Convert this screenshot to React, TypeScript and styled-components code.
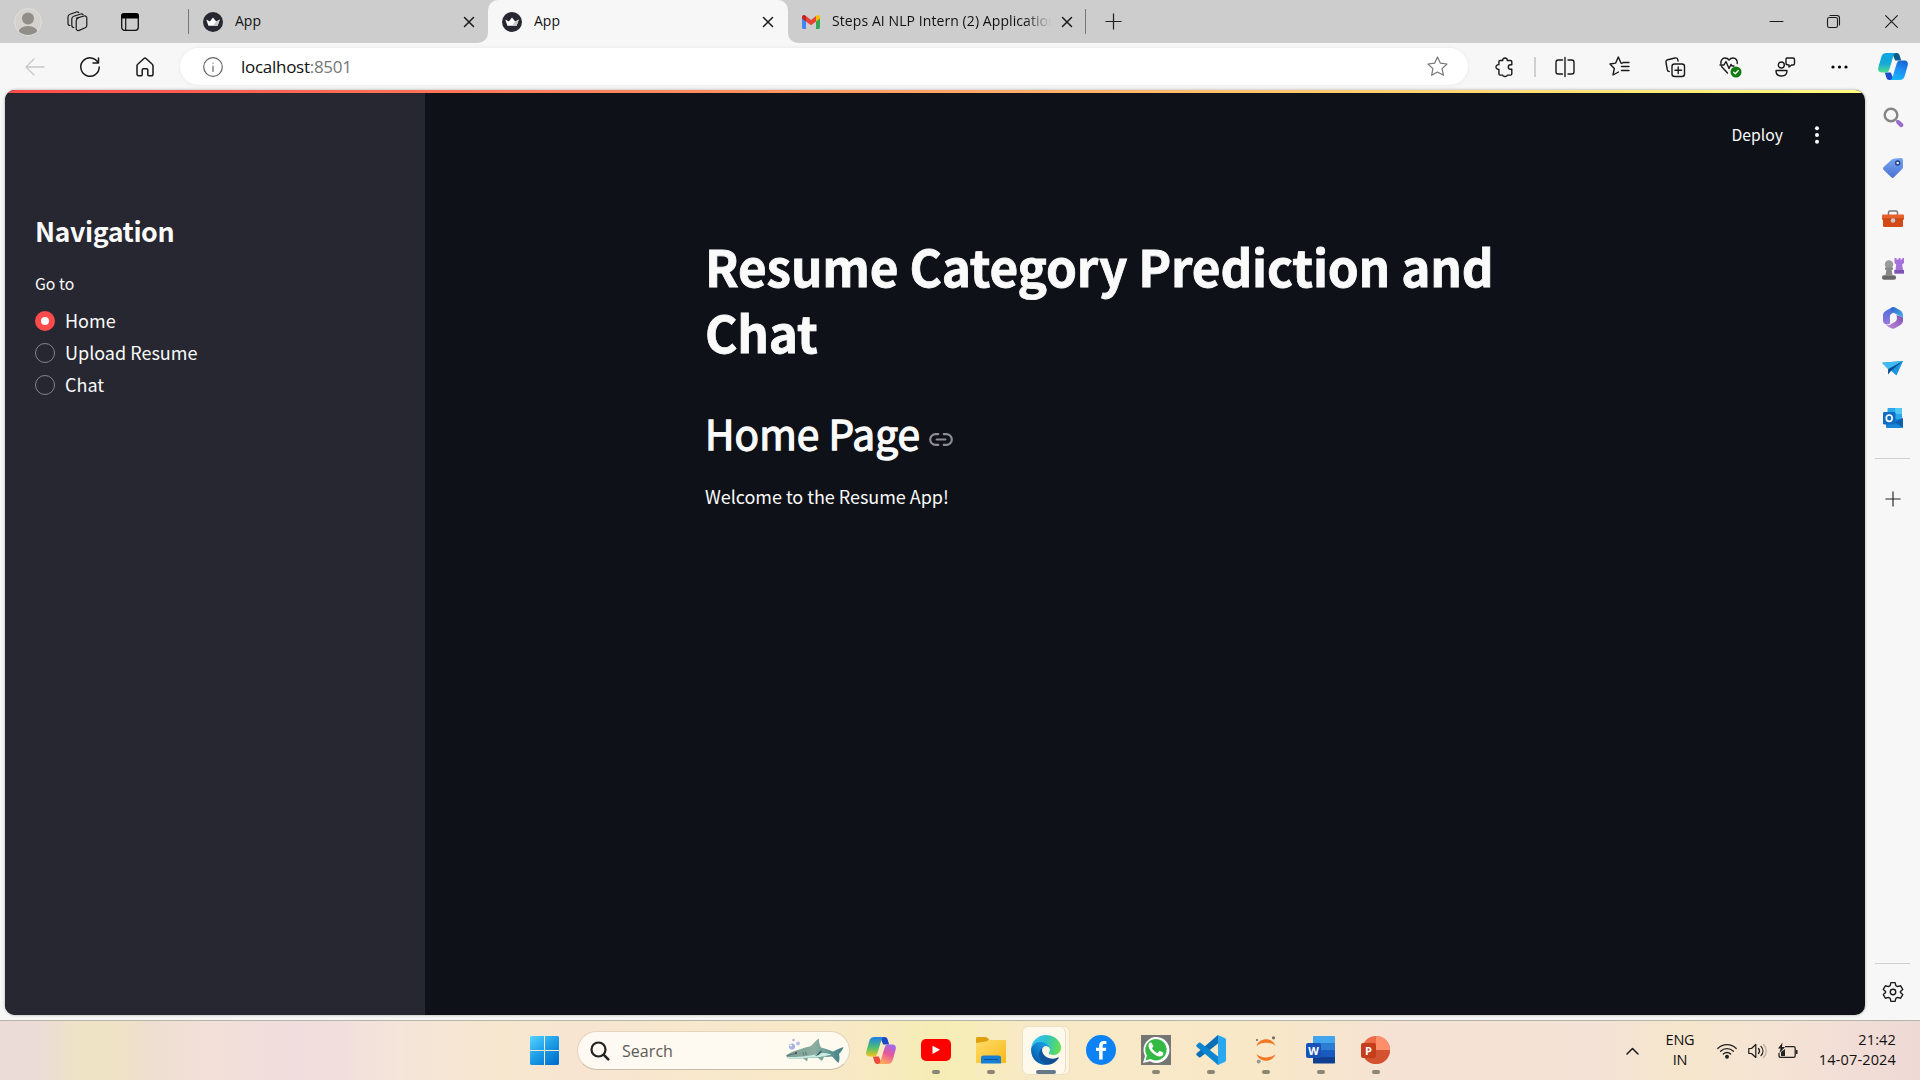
import React from "react";
import styled, { createGlobalStyle, css } from "styled-components";

const UI = `"Open Sans", "Noto Sans", sans-serif`;
const APP = `"Noto Sans CJK SC", "Noto Sans CJK JP", sans-serif`;

const Global = createGlobalStyle`
  * { box-sizing: border-box; }
  html, body { margin: 0; padding: 0; }
  body { width: 1920px; height: 1080px; overflow: hidden; background: #f7f7f7; font-family: ${UI}; color: #111; }
  svg { display: block; flex: none; overflow: visible; }
`;

const Screen = styled.div`
  width: 1920px;
  height: 1080px;
  display: flex;
  flex-direction: column;
`;

/* ---------- tab strip ---------- */
const TabStrip = styled.div`
  height: 43px;
  display: flex;
  flex: none;
  background: #f7f7f7;
`;
const StripLeft = styled.div`
  width: 488px;
  display: flex;
  align-items: center;
  background: #cdcdcd;
  border-bottom-right-radius: 10px;
`;
const StripRight = styled.div`
  flex: 1;
  display: flex;
  align-items: center;
  background: #cdcdcd;
  border-bottom-left-radius: 10px;
`;
const ActiveSlot = styled.div`
  width: 300px;
  background: linear-gradient(#cdcdcd 50%, #f7f7f7 50%);
`;
const Tab = styled.div<{ $w: number; $active?: boolean }>`
  width: ${(p) => p.$w}px;
  height: 43px;
  display: flex;
  align-items: center;
  padding: 0 12px 0 14px;
  ${(p) => p.$active && css`background: #f7f7f7; border-radius: 10px 10px 0 0;`}
`;
const TabTitle = styled.span<{ $fade?: boolean; $track?: number }>`
  flex: 1;
  margin: 0 ${(p) => (p.$fade ? 10 : 3)}px 0 12px;
  font-size: 14px;
  line-height: 20px;
  letter-spacing: ${(p) => p.$track ?? 0}px;
  padding-bottom: 2px;
  white-space: nowrap;
  overflow: hidden;
  ${(p) => p.$fade && css`mask-image: linear-gradient(90deg, #000 88%, transparent 100%);`}
`;
const StripDivider = styled.i`
  width: 1px;
  height: 25px;
  background: #777;
`;
const Slot = styled.div<{ $w: number; $h?: number }>`
  width: ${(p) => p.$w}px;
  height: ${(p) => (p.$h ? p.$h + "px" : "auto")};
  flex: none;
  display: flex;
  align-items: center;
  justify-content: center;
`;
const Spacer = styled.div`
  flex: 1;
`;

/* ---------- toolbar ---------- */
const Body = styled.div`
  height: 977px;
  flex: none;
  display: flex;
`;
const Main = styled.div`
  width: 1866px;
  display: flex;
  flex-direction: column;
`;
const Toolbar = styled.div`
  height: 47px;
  flex: none;
  display: flex;
  align-items: center;
  padding-left: 7px;
`;
const Address = styled.div`
  width: 1288px;
  flex: none;
  height: 37px;
  margin: 0 9px 0 8px;
  border-radius: 19px;
  background: #fff;
  box-shadow: 0 0 4px rgba(0, 0, 0, 0.07);
  display: flex;
  align-items: center;
  padding: 0 20px 0 23px;
`;
const Url = styled.span`
  flex: 1;
  margin-left: 18px;
  padding-bottom: 1px;
  font-size: 17px;
  letter-spacing: -0.28px;
  color: #111;
  span { color: #767676; }
`;
const ToolDivider = styled.i`
  width: 2px;
  height: 20px;
  background: #d0d0d0;
`;

/* ---------- web page ---------- */
const Frame = styled.div`
  width: 1860px;
  height: 925px;
  margin-left: 5px;
  border-radius: 10px;
  overflow: hidden;
  display: flex;
  flex-direction: column;
  background: #0e1117;
  box-shadow: 0 0 3px rgba(0, 0, 0, 0.35);
`;
const Decoration = styled.div`
  height: 3px;
  flex: none;
  background: linear-gradient(90deg, #ff4b4b, #fffd80);
`;
const Columns = styled.div`
  flex: 1;
  display: flex;
`;
const Sidebar = styled.aside`
  width: 420px;
  background: #262730;
  padding: 117px 30px 0;
  font-family: ${APP};
  color: #fafafa;
`;
const NavTitle = styled.h2`
  margin: 0;
  font-size: 26.8px;
  line-height: 42px;
  font-weight: 700;
  letter-spacing: -0.45px;
`;
const GroupLabel = styled.div`
  margin: 19px 0 7px;
  font-size: 15.75px;
  line-height: 26px;
`;
const Option = styled.label`
  height: 32px;
  display: flex;
  align-items: center;
  gap: 10px;
  font-size: 18px;
  line-height: 30px;
`;
const Radio = styled.i<{ $on?: boolean }>`
  width: 20px;
  height: 20px;
  margin-top: 2px;
  border-radius: 50%;
  border: ${(p) => (p.$on ? "6px solid #ff4b4b" : "1px solid #83848c")};
  background: ${(p) => (p.$on ? "#fafafa" : "#262730")};
`;
const Content = styled.main`
  flex: 1;
  display: flex;
  flex-direction: column;
  font-family: ${APP};
  color: #fafafa;
`;
const Header = styled.header`
  height: 84px;
  display: flex;
  align-items: center;
  justify-content: flex-end;
  padding-right: 38px;
  gap: 24px;
  font-size: 15.75px;
  span { padding-bottom: 2px; }
`;
const Article = styled.article`
  width: 880px;
  padding: 56px 0 0 280px;
  box-sizing: content-box;
`;
const Title = styled.h1`
  margin: 0;
  font-size: 49.5px;
  line-height: 66px;
  font-weight: 700;
  letter-spacing: -0.18px;
  -webkit-text-stroke: 0.8px #fafafa;
`;
const Heading = styled.h2`
  margin: 41px 0 0;
  display: flex;
  align-items: center;
  gap: 9px;
  font-size: 40.5px;
  line-height: 54px;
  font-weight: 400;
  letter-spacing: 0.1px;
  -webkit-text-stroke: 1.3px #fafafa;
  svg { margin-top: 12px; }
`;
const Paragraph = styled.p`
  margin: 20px 0 0;
  font-size: 18px;
  line-height: 32px;
  letter-spacing: -0.04px;
`;

/* ---------- edge side bar ---------- */
const EdgeBar = styled.div`
  width: 54px;
  padding-right: 1px;
  display: flex;
  flex-direction: column;
  align-items: center;
`;
const EdgeRule = styled.i`
  width: 35px;
  height: 1px;
  background: #cfcfcf;
`;

/* ---------- task bar ---------- */
const Taskbar = styled.div`
  height: 60px;
  display: flex;
  align-items: center;
  border-top: 1px solid #b9b3aa;
  background: linear-gradient(90deg, #ecdcd8 0, #ecdcd6 40px, #efe3c6 80px, #efe3c6 115px, #eeded0 150px, #f2e0d8 200px,
    #f1dddd 290px, #f1dedd 335px, #f5e5da 400px, #f7e7cf 500px, #f7e5d2 580px, #f8e8cc 700px, #f8e9c6 850px,
    #f5edb4 935px, #f6edb8 960px, #f8e9c6 1030px, #f8e8c8 1270px, #f5e2d4 1390px, #f4e2d6 1600px, #f6e6cc 1680px,
    #f5e4d3 1760px, #f3dfd6 1830px, #eed9d6 1920px);
`;
const Start = styled.div`
  width: 577px;
  display: flex;
  justify-content: flex-end;
  padding-right: 18px;
`;
const SearchBox = styled.div`
  width: 273px;
  height: 39px;
  border-radius: 20px;
  margin-right: 4px;
  background: rgba(255, 253, 248, 0.84);
  border: 1px solid #e3d6bd;
  border-bottom-color: #c9bda6;
  display: flex;
  align-items: center;
  padding: 0 5px 0 12px;
  font-size: 16px;
  color: #5c5a57;
  letter-spacing: 0.05px;
  span { flex: 1; margin-left: 12px; }
`;
const TaskItem = styled.div`
  width: 55px;
  height: 59px;
  flex: none;
  display: flex;
  flex-direction: column;
  align-items: center;
  padding-top: 14px;
`;
const Running = styled.i<{ $wide?: boolean }>`
  width: ${(p) => (p.$wide ? 20 : 8)}px;
  height: 4px;
  border-radius: 2px;
  margin-top: 5px;
  background: ${(p) => (p.$wide ? "#66798a" : "#8b8573")};
`;
const ActiveTile = styled.div`
  width: 48px;
  height: 49px;
  margin-top: -9px;
  border-radius: 6px;
  background: rgba(255, 252, 240, 0.65);
  border: 1px solid #eee0c4;
`;
const ActiveInner = styled.div`
  width: 43px;
  height: 47px;
  border-radius: 6px;
  background: rgba(255, 252, 240, 0.6);
  border-right: 1px solid #e8dcc4;
  padding: 8px 0 0 5px;
  display: flex;
  flex-direction: column;
  align-items: center;
`;
const Lang = styled.div`
  width: 60px;
  text-align: center;
  font-size: 14.5px;
  line-height: 20px;
  letter-spacing: -0.2px;
  padding-bottom: 2px;
`;
const Clock = styled.div`
  width: 91px;
  margin-right: 24px;
  text-align: right;
  font-size: 14.5px;
  line-height: 20px;
  letter-spacing: 0.15px;
  padding-bottom: 2px;
`;

/* ---------- line icons ---------- */
type LP = { w: number; h?: number; box?: string; c?: string; s?: number; children: React.ReactNode };
const Line = ({ w, h = w, box, c = "#1a1a1a", s = 1.3, children }: LP) => (
  <svg width={w} height={h} viewBox={box ?? `0 0 ${w} ${h}`} fill="none" stroke={c} strokeWidth={s} strokeLinecap="round" strokeLinejoin="round">
    {children}
  </svg>
);

const Crown = () => (
  <svg width="20" height="20" viewBox="0 0 20 20">
    <circle cx="10" cy="10" r="10" fill="#262730" />
    <path d="M3.3 7.4 6.8 9.6 10 5.4l3.2 4.2 3.6-2.2-2.2 6.3H5.4z" fill="#fff" />
    <path d="M13.2 9.6l3.6-2.2-2.2 6.3H10z" fill="#c9c9cc" />
  </svg>
);
const Cross = ({ w = 10, s = 1.5 }: { w?: number; s?: number }) => (
  <Line w={w} box="0 0 10 10" s={(s * 10) / w}><path d="M.5.5l9 9M9.5.5l-9 9" /></Line>
);
const Plus = ({ w = 18 }: { w?: number }) => (
  <Line w={w} box="0 0 18 18" c="#222"><path d="M9 1v16M1 9h16" /></Line>
);
const Avatar = () => (
  <svg width="28" height="28" viewBox="0 0 28 28">
    <defs><clipPath id="av"><circle cx="14" cy="14" r="13" /></clipPath></defs>
    <circle cx="14" cy="14" r="13.4" fill="#d4d2cf" stroke="#e2e0dd" />
    <g clipPath="url(#av)" fill="#918d89"><circle cx="14" cy="10.5" r="6" /><ellipse cx="14" cy="25" rx="9.8" ry="7" /></g>
  </svg>
);
const Gmail = () => (
  <svg width="18" height="14" viewBox="0 0 18 14">
    <path d="M0 2v10.6C0 13.4.6 14 1.4 14H4V5z" fill="#4285f4" />
    <path d="M18 2v10.6c0 .8-.6 1.4-1.4 1.4H14V5z" fill="#34a853" />
    <path d="M14 1.2V6.500l4-3V2c0-1.900-2.100-2.500-3.200-1.600z" fill="#fbbc04" />
    <path d="M4 6.500V1l5 3.900L14 1v5.500L9 10.300z" fill="#ea4335" />
    <path d="M0 2v1.500l4 3V1L3.200.4C2.100-.5 0 .1 0 2z" fill="#c5221f" />
  </svg>
);

const Copilot = ({ id, w, colors }: { id: string; w: number; colors: string[] }) => (
  <svg width={w} height={w * 0.9} viewBox="0 0 30 27">
    <defs>
      <linearGradient id={id + "a"} x1="0" y1="0" x2="0" y2="1"><stop offset="0" stopColor={colors[0]} /><stop offset=".55" stopColor={colors[1]} /><stop offset="1" stopColor={colors[2]} /></linearGradient>
      <linearGradient id={id + "b"} x1=".8" y1="0" x2=".4" y2="1"><stop offset="0" stopColor={colors[3]} /><stop offset=".5" stopColor={colors[4]} /><stop offset="1" stopColor={colors[5]} /></linearGradient>
    </defs>
    <path d="M14 0h4.500c2 0 2.800 1.200 3.300 3l1.400 4.500h-6z" fill={colors[6]} />
    <path d="M16 27h-4.500c-2 0-2.800-1.200-3.300-3L6.800 19.500h6z" fill={colors[7]} />
    <path d="M8.500 0H18c-1.500.3-2.200 1.500-2.700 3.200L11.500 16c-.7 2.400-1.700 3.500-4 3.500H3.600C.8 19.500-.4 17.300.3 14.600L3.300 4C4 1.400 5.600 0 8.500 0z" fill={`url(#${id}a)`} />
    <path d="M21.500 27H12c1.500-.3 2.200-1.500 2.700-3.200L18.500 11c.7-2.400 1.700-3.500 4-3.500h3.900c2.800 0 4 2.200 3.300 4.900L26.700 23c-.7 2.600-2.300 4-5.200 4z" fill={`url(#${id}b)`} />
  </svg>
);

/* ---------- edge sidebar icons ---------- */
const SideSearch = () => (
  <svg width="20" height="20" viewBox="0 0 20 20" fill="none"><circle cx="8" cy="8" r="6.300" stroke="#858585" strokeWidth="2.400" /><path d="M12.700 12.700l1.800 1.800" stroke="#999" strokeWidth="2" /><path d="M15.300 15.300l3 2.800" stroke="#9b6bcc" strokeWidth="4.200" strokeLinecap="round" /></svg>
);
const SideTag = () => (
  <svg width="20" height="20" viewBox="0 0 20 20"><defs><linearGradient id="tg" x1="0" y1="0" x2="0" y2="1"><stop stopColor="#76a5f0" /><stop offset="1" stopColor="#4a72d4" /></linearGradient></defs><path d="M10.500.8 17.800 0c1.300 0 2.200.8 2.200 2v7c0 .8-.3 1.400-.8 2l-8.300 8.300c-.8.8-1.800.8-2.600 0L.7 12c-.9-.9-.9-2 0-2.900L8.800 1.500z" fill="url(#tg)" /><circle cx="14.700" cy="5" r="2" fill="#dce8fb" stroke="#253f8a" strokeWidth="1.400" /></svg>
);
const SideTools = () => (
  <svg width="22" height="17" viewBox="0 0 22 17"><path d="M6.500 5V2.500C6.500 1.500 7 1 8 1h6c1 0 1.500.5 1.500 1.500V5" fill="none" stroke="#777" strokeWidth="1.500" /><rect x="1" y="6" width="20" height="11" rx="1.500" fill="#d34a17" /><rect x="0" y="4.500" width="22" height="5" rx="1" fill="#e8602a" /><rect x="0" y="8.500" width="22" height="1" fill="#b83a0e" /><circle cx="11" cy="10.500" r="2.300" fill="#c9c9c9" /></svg>
);
const SideGames = () => (
  <svg width="22" height="22" viewBox="0 0 22 22"><path d="M12.500 0h2v1.500h2V0h2v1.500h1.800V0H22v5l-1.800 1.500L21 12h1v3.500h-9.500V12h1l.7-5.500L12.500 5z" fill="#a673db" /><path d="M12.500 12H22v3.500h-9.500z" fill="#7c52b5" /><circle cx="7" cy="6.500" r="4.200" fill="#9a9a9a" /><path d="M3 9.500h8v2.200H9.600L10.500 17h-7l.9-5.300H3z" fill="#888" /><rect x="0" y="17.300" width="14" height="4.500" rx="2" fill="#686868" /></svg>
);
const Side365 = () => (
  <svg width="20" height="22" viewBox="0 0 20 22">
    <defs>
      <linearGradient id="m1" x1="0" y1="0" x2="0" y2="1"><stop stopColor="#3f6fe0" /><stop offset="1" stopColor="#9a78dc" /></linearGradient>
      <linearGradient id="m2" x1="0" y1="0" x2="1" y2="1"><stop stopColor="#2b63c8" /><stop offset="1" stopColor="#4fb8f0" /></linearGradient>
      <linearGradient id="m3" x1="0" y1="1" x2="1" y2="0"><stop stopColor="#c48be0" /><stop offset="1" stopColor="#7d4fb0" /></linearGradient>
    </defs>
    <path d="M9.500 0 3 3.700C1 4.900 0 6.400 0 8.600v5c0 2 1.400 3.800 3.500 4 1.300.1 2.500-.4 3.500-1V9.500c0-1.200.7-2.300 2-3l3-1.700z" fill="url(#m1)" />
    <path d="M9.500 0c1-.2 2 .1 2.700.6l5.100 3c1.800 1 2.700 2.700 2.700 4.700v5.500c0-2-1-3.300-2.500-4.200L9.800 5.300C8.200 4.300 7.700 1.500 9.500 0z" fill="url(#m2)" />
    <path d="M20 11v2.500c0 2-.9 3.400-2.600 4.500l-5 3.100c-1.800 1-3.300 1-5 0l-4.700-3c2.300.6 3.800 0 5-.8l4-2.300c1.300-.8 1.800-1.700 1.800-3V8l4 1.600c1.500.9 2.500 1.200 2.500 1.400z" fill="url(#m3)" />
    <circle cx="10.300" cy="11" r="3.500" fill="#f7f7f7" />
  </svg>
);
const SidePlane = () => (
  <svg width="21" height="15" viewBox="0 0 21 15"><path d="M0 1.800 21 0 14.500 14.500 9 9.800 6 13V8z" fill="#1b95e0" /><path d="M0 1.800 21 0 6.500 8z" fill="#3fb9f2" /><path d="M6.500 8 21 0 9 9.800 6 13.500z" fill="#0c4a8c" /></svg>
);
const SideOutlook = () => (
  <svg width="20" height="20" viewBox="0 0 20 20"><rect x="4.500" y="0" width="14.500" height="14" rx="1" fill="#2aa7ea" /><path d="M12 0h7v6h-7z" fill="#50c8f5" /><path d="M3 11h17v8a1 1 0 0 1-1 1H4a1 1 0 0 1-1-1z" fill="#1686d8" /><path d="M20 10v9.500L11 14z" fill="#0f5fae" /><rect x="0" y="4" width="12.500" height="12.500" rx="1.200" fill="#0f6cc4" /><ellipse cx="6.200" cy="10.200" rx="2.900" ry="3.200" fill="none" stroke="#fff" strokeWidth="1.700" /></svg>
);

/* ---------- task bar icons ---------- */
const Windows = () => (
  <svg width="29" height="29" viewBox="0 0 29 29"><defs><linearGradient id="wn" gradientUnits="userSpaceOnUse" x1="0" y1="0" x2="24" y2="29"><stop stopColor="#56d4ff" /><stop offset=".5" stopColor="#1f9fe8" /><stop offset="1" stopColor="#0070cf" /></linearGradient></defs><path d="M1 0h13v14H0V1zM15 0h13l1 1v13H15zM0 15h14v14H1l-1-1zM15 15h14v13l-1 1H15z" fill="url(#wn)" /></svg>
);
const Shark = () => (
  <svg width="58" height="26" viewBox="0 0 58 26">
    <defs><linearGradient id="sk" x1="0" y1="0" x2="1" y2="0"><stop stopColor="#7a9c96" /><stop offset=".5" stopColor="#8cae9f" /><stop offset="1" stopColor="#3d7f86" /></linearGradient></defs>
    <circle cx="6" cy="8.500" r="3.100" fill="#a9b2e2" /><circle cx="12" cy="5.500" r="1.900" fill="#b5bde8" /><circle cx="7.500" cy="2" r="1.300" fill="#c4a9dc" /><circle cx="5" cy="7.500" r="1" fill="#fff" />
    <path d="M0 17.500C6 13 15 11 25 8 28 5 30 2 32.800.5 33 4 33.500 7 35 9.500c4 1 8 2.500 12 4 3.500-1.500 7-3.500 10.500-4.500-1 3-3 5.500-4.500 7 .7 3 .8 6-.5 9-2.500-2-4.500-4.500-6.500-6.500-3 .5-5.500.5-8 .3L36 23l-4-3H22l-1 3.500-4-3.300C10 20.500 4 21 1.500 20z" fill="url(#sk)" />
    <path d="M1.500 19c10 .5 24-1 32-3.500 4.500-1 9 0 12 1-7 2-12 3-24 3.200C12 20.500 5 21 1.500 20z" fill="#c9ebe2" />
    <path d="M36 12.500c-2.500 0-3 3-7 5.500 3.500-.5 6-2 7-5.500z" fill="#35616a" /><path d="M1 17.500l9-2M17 14.500l1 3M19.500 14l1 3" stroke="#48696c" strokeWidth=".8" /><circle cx="10" cy="15" r="1" fill="#702b38" />
  </svg>
);
const YouTube = () => (
  <svg width="30" height="28" viewBox="0 0 30 28"><rect y="3" width="30" height="22" rx="5" fill="#f00" /><path d="M11.500 9.700v8.200l7.500-4.100z" fill="#fff" /></svg>
);
const Folder = () => (
  <svg width="30" height="28" viewBox="0 0 30 28"><defs><linearGradient id="fd" x1="0" y1="0" x2="1" y2="1"><stop stopColor="#ffdd6b" /><stop offset="1" stopColor="#f7b818" /></linearGradient></defs><path d="M0 2.500C0 1.500.6 1 1.500 1H9c1 0 1.800.3 2.500 1L14 4.500h15V9H0z" fill="#dfa00d" /><path d="M0 7l10-1.500L13 4h16c.6 0 1 .4 1 1v21c0 .6-.4 1-1 1H1c-.6 0-1-.4-1-1z" fill="url(#fd)" /><path d="M5 27.500V22c0-1.700 1-2.500 2.500-2.500h15c1.500 0 2.500.8 2.500 2.500v5.500z" fill="#1580d3" /><path d="M8 23.500h14" stroke="#0b4f94" /></svg>
);
const EdgeLogo = () => (
  <svg width="30" height="30" viewBox="0 0 256 256">
    <defs>
      <linearGradient id="e1" x1="60" y1="178" x2="232" y2="178" gradientUnits="userSpaceOnUse"><stop stopColor="#0c59a4" /><stop offset="1" stopColor="#114a8b" /></linearGradient>
      <linearGradient id="e2" x1="157" y1="100" x2="46" y2="221" gradientUnits="userSpaceOnUse"><stop stopColor="#1b9de2" /><stop offset=".5" stopColor="#1383d0" /><stop offset="1" stopColor="#0660b0" /></linearGradient>
      <linearGradient id="e3" x1="20" y1="60" x2="250" y2="110" gradientUnits="userSpaceOnUse"><stop stopColor="#35c1f1" /><stop offset=".45" stopColor="#2cc3c8" /><stop offset="1" stopColor="#66e04c" /></linearGradient>
    </defs>
    <path d="M231 190.500c-3.400 1.800-6.900 3.300-10.500 4.700a102 102 0 0 1-35.900 6.500c-47.300 0-88.500-32.500-88.500-74.300 0-11.500 6.400-22 16.500-27.500-42.800 1.800-53.800 46.400-53.800 72.500 0 74 68.100 81.400 82.800 81.400 7.900 0 19.800-2.300 27-4.600l1.300-.4a128 128 0 0 0 66.600-52.800 4 4 0 0 0-5.500-5.500z" fill="url(#e1)" />
    <path d="M105.700 241.500a79 79 0 0 1-22.700-21.400 80.700 80.700 0 0 1 29.500-120c3.200-1.500 8.500-4.100 15.600-4a32 32 0 0 1 25.700 13 32 32 0 0 1 6.300 18.700c0-.2 24.500-79.600-80-79.600-43.900 0-80 41.600-80 78.200a130 130 0 0 0 12.100 56 128 128 0 0 0 156.400 67 75.500 75.500 0 0 1-62.800-8z" fill="url(#e2)" />
    <path d="M152.300 148.900c-.8 1-3.300 2.500-3.300 5.700 0 2.600 1.700 5.100 4.700 7.200 14.400 10 41.500 8.700 41.600 8.700a59.600 59.600 0 0 0 30.300-8.400 61.400 61.400 0 0 0 30.400-52.900c.3-22.400-8-37.300-11.300-43.900C223.500 23.900 177.700 0 128 0A128 128 0 0 0 0 126.200c.5-36.500 36.800-66 80-66 3.500 0 23.500.3 42 10 16.300 8.600 24.900 19 30.800 29.200 6.200 10.700 7.300 24.100 7.300 29.500 0 5.300-2.700 13.300-7.800 20z" fill="url(#e3)" />
    <path d="M96 127c0-11 6.400-22 16.500-27.500 20-8 47 4 47.500 28 0 6-3 16-8 22-3 3-4 7 2 12 14 11 41 9.500 55 6-20 18-113 18-113-40.500z" fill="#fbf5e4" opacity=".9" />
  </svg>
);
const Facebook = () => (
  <svg width="30" height="30" viewBox="0 0 24 24"><circle cx="12" cy="12" r="12" fill="#0c82f5" /><path d="M13.300 19.500v-6.700h2.500l.4-2.600h-2.900V8.600c0-.9.400-1.400 1.500-1.400h1.500V4.900c-.6-.1-1.300-.2-2.100-.2-2.300 0-3.700 1.300-3.700 3.700v1.800H8v2.600h2.500v6.700z" fill="#fff" /></svg>
);
const WhatsApp = () => (
  <svg width="30" height="30" viewBox="0 0 30 30"><path d="M0 0h30v30H0z" fill="#757573" /><path d="M2 28l2-7A13 13 0 1 1 9 26.200z" fill="#fff" /><path d="M4.500 25.500l1.400-5A10.700 10.700 0 1 1 9.500 24z" fill="#35b945" /><path d="M11 8.500c-.4-.9-.8-.9-1.300-.9-1 0-2.200 1.300-2.200 3.200 0 4 6 10.700 11.200 10.700 2.100 0 3.600-1.400 3.600-3.100 0-.6-.1-.8-.5-1l-2.700-1.300c-.5-.2-.8-.1-1.100.3l-1.100 1.400c-.3.300-.6.300-1 .1-1.800-.7-3.700-2.400-4.700-4.300-.2-.4-.2-.6.1-.9l.8-1c.2-.3.3-.6.1-.9z" fill="#fff" /></svg>
);
const VSCode = () => (
  <svg width="30" height="30" viewBox="0 0 30 30"><path d="M22 0v8.500L4.500 22.300c-.5.400-1 .4-1.500 0L.7 20.200c-.7-.7-.6-1.400 0-2z" fill="#0a6fb7" /><path d="M22 30v-8.500L4.500 7.700c-.5-.4-1-.4-1.500 0L.7 9.800c-.7.700-.6 1.400 0 2z" fill="#0b85cf" /><path d="M22 0l6.800 3c.8.400 1.200.9 1.200 1.700v20.600c0 .8-.4 1.300-1.200 1.700L22 30c-.7.100-1.200-.2-1.700-.7.900.8 1.700.3 1.700-1V1.700c0-1.200-.8-1.700-1.700-1 .5-.5 1-.8 1.700-.7z" fill="#29a8f0" /></svg>
);
const Jupyter = () => (
  <svg width="22" height="30" viewBox="0 0 22 30"><path d="M1.500 11C4 2 18 2 20.500 11 16 6.500 6 6.500 1.500 11zM1.500 19c2.500 9 16.500 9 19 0-4.500 4.500-14.500 4.500-19 0z" fill="#f37726" /><circle cx="18.500" cy="2.800" r="1.600" fill="#6d6a66" /><circle cx="2" cy="5" r="1.100" fill="#6d6a66" /><circle cx="3.700" cy="26.500" r="2" fill="#999792" /></svg>
);
const Badge = styled.span<{ $bg: string }>`
  position: absolute;
  left: 0;
  top: 7px;
  width: 15px;
  height: 15px;
  border-radius: 2px;
  background: ${(p) => p.$bg};
  color: #fff;
  font-size: 11px;
  line-height: 15px;
  font-weight: 700;
  text-align: center;
`;
const OfficeIcon = styled.div`
  position: relative;
  width: 29px;
  height: 28px;
`;
const Word = () => (
  <OfficeIcon>
    <svg width="29" height="28" viewBox="0 0 29 28"><path d="M7 1c0-.6.400-1 1-1h20c.6 0 1 .4 1 1v6H7z" fill="#41a5ee" /><path d="M7 7h22v7H7z" fill="#2b7cd3" /><path d="M7 14h22v7H7z" fill="#185abd" /><path d="M7 21h22v5.500c0 .6-.4 1-1 1H8c-.6 0-1-.4-1-1z" fill="#103f91" /></svg>
    <Badge $bg="#1a51b8">W</Badge>
  </OfficeIcon>
);
const PowerPoint = () => (
  <OfficeIcon>
    <svg width="29" height="28" viewBox="0 0 29 28"><circle cx="15" cy="14" r="14" fill="#ed6c47" /><path d="M15 0a14 14 0 0 1 14 14H15z" fill="#ff8f6b" /><path d="M1 14a14 14 0 0 0 28 0z" fill="#d35230" /></svg>
    <Badge $bg="#c43e1c">P</Badge>
  </OfficeIcon>
);

const task = [
  { el: <YouTube />, run: true },
  { el: <Folder />, run: true },
  { el: <EdgeLogo />, run: true, active: true },
  { el: <Facebook />, run: false },
  { el: <WhatsApp />, run: true },
  { el: <VSCode />, run: true },
  { el: <Jupyter />, run: true },
  { el: <Word />, run: true },
  { el: <PowerPoint />, run: true },
];

export default function App() {
  return (
    <Screen>
      <Global />
      <TabStrip>
        <StripLeft>
          <Slot $w={56}><Avatar /></Slot>
          <Slot $w={43}>
            <Line w={21} s={1.2}>
              <path d="M9.500 7.200 17 5c1.500-.4 2.800.4 2.800 2v7.500c0 1.200-.5 1.900-1.600 2.300l-6 2.600c-1.700.7-3-.2-3-1.800V10c0-1.500.7-2.300 2-2.700" />
              <path d="M6.800 16.500c-1.200 0-2-.7-2-2V8c0-1.500.7-2.300 2-2.700l7-2.300c1-.3 1.700 0 2.200.6M3 14.500c-1.200 0-2-.7-2-2V6c0-1.500.7-2.300 2-2.700L9.500 1c1-.3 1.700 0 2.200.6" />
            </Line>
          </Slot>
          <Slot $w={62}>
            <svg width="18" height="18" viewBox="0 0 18 18"><rect x=".7" y=".7" width="16.600" height="16.600" rx="3" fill="none" stroke="#111" strokeWidth="1.300" /><path d="M0 5.500V3a3 3 0 0 1 3-3h12a3 3 0 0 1 3 3v2.500z" fill="#000" /><path d="M4.700 5v12" stroke="#111" strokeWidth="1.200" /></svg>
          </Slot>
          <Slot $w={27} />
          <StripDivider />
          <Tab $w={299}><Crown /><TabTitle>App</TabTitle><Slot $w={15}><Cross /></Slot></Tab>
        </StripLeft>
        <ActiveSlot>
          <Tab $w={300} $active><Crown /><TabTitle>App</TabTitle><Slot $w={16}><Cross /></Slot></Tab>
        </ActiveSlot>
        <StripRight>
          <Tab $w={297}><Gmail /><TabTitle $fade $track={0.08}>Steps AI NLP Intern (2) Application</TabTitle><Slot $w={12}><Cross /></Slot></Tab>
          <StripDivider />
          <Slot $w={54}><Plus w={17} /></Slot>
          <Spacer />
          <Slot $w={57}><Line w={13} s={1}><path d="M0 6.500h13" /></Line></Slot>
          <Slot $w={57}><Line w={13} s={1.1}><rect x=".5" y="2.500" width="10" height="10" rx="1.800" /><path d="M3 .5h7c1.500 0 2.500 1 2.500 2.500v7" /></Line></Slot>
          <Slot $w={58}><Cross w={13} s={1.1} /></Slot>
        </StripRight>
      </TabStrip>

      <Body>
        <Main>
          <Toolbar>
            <Slot $w={56}><Line w={20} c="#c8c8c8"><path d="M19 10H1M9 2l-8 8 8 8" /></Line></Slot>
            <Slot $w={54}><Line w={20} s={1.5}><path d="M18 5.500A9.200 9.200 0 1 0 19.200 10M18.500 1v5H13" /></Line></Slot>
            <Slot $w={55}><Line w={18} h={20} s={1.5}><path d="M1 8.800c0-.6.200-1.100.7-1.500L8 1.500c.6-.5 1.400-.5 2 0l6.300 5.800c.5.400.7.900.7 1.500V17c0 1-.7 1.800-1.700 1.800h-2.500c-.6 0-1-.4-1-1V13c0-.8-.5-1.300-1.300-1.300h-3c-.8 0-1.300.5-1.300 1.300v4.800c0 .6-.4 1-1 1H2.700c-1 0-1.700-.8-1.700-1.800z" /></Line></Slot>
            <Address>
              <Line w={20} c="#666" s={1.2}><circle cx="10" cy="10" r="9.300" /><path d="M10 9v5.500M10 6v.2" /></Line>
              <Url>localhost<span>:8501</span></Url>
              <Line w={21} c="#777" s={1.2}><path d="M10.500 1l2.900 6.200 6.600.8-4.900 4.600 1.300 6.700-5.900-3.300-5.900 3.300 1.300-6.700L1 8l6.600-.8z" /></Line>
            </Address>
            <Slot $w={56}><Line w={20} s={1.400}><path d="M6.500 3.500h1.200C7.500 2 8.500 1 10 1s2.500 1 2.300 2.500h3.200c.8 0 1.300.5 1.300 1.300v3h-1.300c-1.300 0-2.200 1-2.200 2.200s.9 2.200 2.200 2.200h1.300v4.600c0 .8-.5 1.300-1.300 1.300h-3.200C12.500 18.500 11.500 19.500 10 19.500S7.500 18.500 7.700 18.100H5.200c-.8 0-1.300-.5-1.300-1.300v-4.500C2 12.600 1 11.500 1 10s1-2.500 2.900-2.300V4.800c0-.8.500-1.300 1.300-1.300z" /></Line></Slot>
            <Slot $w={4}><ToolDivider /></Slot>
            <Slot $w={55}><Line w={20} s={1.400}><path d="M7 3H3.200C2 3 1 4 1 5.200v9.600C1 16 2 17 3.200 17H7M13 3h3.800C18 3 19 4 19 5.200v9.600c0 1.200-1 2.200-2.200 2.200H13M7 3h.5M7 17h.5M10 .5v19" /></Line></Slot>
            <Slot $w={55}><Line w={21} s={1.400}><path d="M13 7.300 12 7 9.300 1 6.700 7.100 1 8l4.300 4.500L4 19l5.500-3M14 6.500h6M12.500 10.500H20M12.500 14.500H20" /></Line></Slot>
            <Slot $w={55}><Line w={20} s={1.400}><rect x="7" y="7" width="12.500" height="12.500" rx="2.500" /><path d="M13.200 10v6.500M10 13.200h6.500M4.200 14.500c-1 0-1.600-.6-1.800-1.500L1 5.500C.7 4.200 1.400 3 2.800 2.700L10 1c1.400-.3 2.500.4 2.800 1.700l.3 1.300" /></Line></Slot>
            <Slot $w={56}>
              <Line w={22} s={1.400}><path d="M8.500 17 2.500 10.500M2 7.500C1.500 5 3 2 6 2c2 0 3.300 1 4 2 .8-1 2-2 4-2 3 0 4.800 2.800 4.200 5.500M1 9h4l2-3.500 3 7 2-4 1 1.500h2" /><circle cx="17" cy="16" r="5.500" fill="#107c10" stroke="none" /><path d="M14.700 16.200l1.600 1.500 3-3.200" stroke="#fff" /></Line>
            </Slot>
            <Slot $w={54}><Line w={20} s={1.400}><circle cx="6.300" cy="8" r="3" /><path d="M1.500 13.500h10c.3 0 .5.200.5.500 0 3-2 5-5.500 5S1 17 1 14c0-.3.200-.5.500-.5zM12 1h6c1 0 1.500.5 1.500 1.500v4C19.500 7.500 19 8 18 8h-1.500L14 10V8c-1.500 0-3-.5-3-1.500v-4C11 1.500 11.300 1 12 1z" /></Line></Slot>
            <Slot $w={54}><svg width="17" height="4" viewBox="0 0 17 4"><circle cx="2" cy="2" r="1.600" /><circle cx="8.500" cy="2" r="1.600" /><circle cx="15" cy="2" r="1.600" /></svg></Slot>
          </Toolbar>
          <Frame>
            <Decoration />
            <Columns>
              <Sidebar>
                <NavTitle>Navigation</NavTitle>
                <GroupLabel>Go to</GroupLabel>
                <Option><Radio $on />Home</Option>
                <Option><Radio />Upload Resume</Option>
                <Option><Radio />Chat</Option>
              </Sidebar>
              <Content>
                <Header>
                  <span>Deploy</span>
                  <svg width="20" height="18" viewBox="0 0 20 18" fill="#fafafa"><circle cx="10" cy="2.300" r="2" /><circle cx="10" cy="9" r="2" /><circle cx="10" cy="15.700" r="2" /></svg>
                </Header>
                <Article>
                  <Title>Resume Category Prediction and<br />Chat</Title>
                  <Heading>
                    Home Page
                    <Line w={24} h={13} box="1 6 22 12" c="#8b8d92" s={2}><path d="M9.500 17H7A5 5 0 0 1 7 7h2.500M14.500 7H17a5 5 0 0 1 0 10h-2.500M8 12h8" /></Line>
                  </Heading>
                  <Paragraph>Welcome to the Resume App!</Paragraph>
                </Article>
              </Content>
            </Columns>
          </Frame>
        </Main>
        <EdgeBar>
          <Slot $w={54} $h={47}><Copilot id="c1" w={30} colors={["#0fa5e0", "#16a9d6", "#4fe08a", "#1a5fd0", "#1f8ff5", "#18b4f8", "#0b5a8c", "#1a4fd0"]} /></Slot>
          <Slot $w={52} $h={54}><SideSearch /></Slot>
          <Slot $w={54} $h={48}><SideTag /></Slot>
          <Slot $w={54} $h={53}><SideTools /></Slot>
          <Slot $w={54} $h={47}><SideGames /></Slot>
          <Slot $w={54} $h={52}><Side365 /></Slot>
          <Slot $w={54} $h={48}><SidePlane /></Slot>
          <Slot $w={54} $h={52}><SideOutlook /></Slot>
          <Slot $w={54} $h={28}><EdgeRule /></Slot>
          <Slot $w={54} $h={53}><Plus w={16} /></Slot>
          <Spacer />
          <EdgeRule />
          <Slot $w={54} $h={56}>
            <Line w={22} s={1.500} box="0 0 24 24"><path d="M9.700 1.800h4.600l.8 3.300 1.900 1.100 3.300-1 2.300 4-2.500 2.300v1l2.500 2.300-2.300 4-3.300-1-1.900 1.100-.8 3.300H9.700l-.8-3.300L7 17.800l-3.300 1-2.300-4 2.500-2.300v-1L1.400 9.200l2.300-4 3.300 1 1.900-1.100z" /><circle cx="12" cy="12" r="3" /></Line>
          </Slot>
        </EdgeBar>
      </Body>

      <Taskbar>
        <Start><Windows /></Start>
        <SearchBox>
          <Line w={20} s={2.200} c="#222"><circle cx="8.500" cy="8.500" r="7" /><path d="M13.800 13.800l4.500 4.500" strokeWidth="2.600" /></Line>
          <span>Search</span>
          <Shark />
        </SearchBox>
        <Slot $w={54}><Copilot id="c2" w={30} colors={["#1f7fe8", "#4fbf70", "#f5c518", "#9a6cf0", "#e8569b", "#ffa95a", "#1a49c8", "#ee4d3d"]} /></Slot>
        {task.map((t, i) =>
          t.active ? (
            <TaskItem key={i}><ActiveTile><ActiveInner>{t.el}<Running $wide /></ActiveInner></ActiveTile></TaskItem>
          ) : (
            <TaskItem key={i}><Slot $w={30} $h={30}>{t.el}</Slot>{t.run && <Running />}</TaskItem>
          )
        )}
        <Spacer />
        <Slot $w={36}><Line w={13} h={8} s={1.500}><path d="M1 7l5.500-5.500L12 7" /></Line></Slot>
        <Lang>ENG<br />IN</Lang>
        <Slot $w={34}>
          <svg width="20" height="16" viewBox="0 0 20 16" fill="none" stroke="#222" strokeWidth="1.300" strokeLinecap="round"><path d="M.8 5.500a13 13 0 0 1 18.400 0M3.600 8.300a9.200 9.200 0 0 1 12.800 0M6.300 11a5.300 5.300 0 0 1 7.400 0" /><circle cx="10" cy="13.800" r="1.300" fill="#222" /></svg>
        </Slot>
        <Slot $w={27}>
          <Line w={19} h={16} s={1.200}><path d="M.8 5.500h2.700L7.800 1.500v13L3.500 10.500H.8zM10.500 5.500c1.300 1.500 1.300 3.500 0 5M13 3.300c2.600 2.800 2.600 6.600 0 9.400" /><path d="M15.500 1.500c3.600 3.800 3.600 9.200 0 13" stroke="#b8aca2" /></Line>
        </Slot>
        <Slot $w={34}>
          <svg width="20" height="16" viewBox="0 0 20 16"><path d="M7 3.600h8.500c1 0 1.700.7 1.700 1.700v7.400c0 1-.7 1.700-1.700 1.700H2.700c-1 0-1.700-.7-1.700-1.700V10" fill="none" stroke="#222" strokeWidth="1.300" /><path d="M18 7h1.500v4H18zM3 13V9l4-3v7zM4.500-.5 0 5.500h2.500L1.500 10 7 4H4z" fill="#222" /></svg>
        </Slot>
        <Clock>21:42<br />14-07-2024</Clock>
      </Taskbar>
    </Screen>
  );
}
